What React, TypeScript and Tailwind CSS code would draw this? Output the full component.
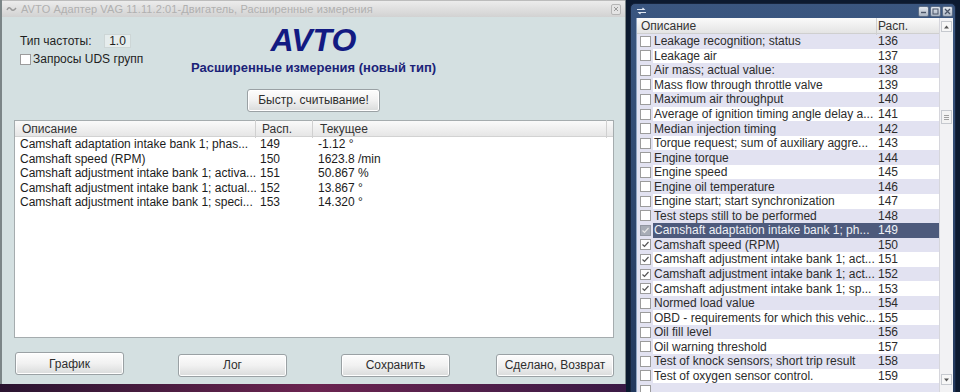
import React from "react";

const leftRows = [
  ["Camshaft adaptation intake bank 1; phas...", "149", "-1.12 °"],
  ["Camshaft speed (RPM)", "150", "1623.8 /min"],
  ["Camshaft adjustment intake bank 1; activa...", "151", "50.867 %"],
  ["Camshaft adjustment intake bank 1; actual...", "152", "13.867 °"],
  ["Camshaft adjustment intake bank 1; speci...", "153", "14.320 °"],
];

const rightRows: [string, string, boolean][] = [
  ["Leakage recognition; status", "136", false],
  ["Leakage air", "137", false],
  ["Air mass; actual value:", "138", false],
  ["Mass flow through throttle valve", "139", false],
  ["Maximum air throughput", "140", false],
  ["Average of ignition timing angle delay a...", "141", false],
  ["Median injection timing", "142", false],
  ["Torque request; sum of auxiliary aggre...", "143", false],
  ["Engine torque", "144", false],
  ["Engine speed", "145", false],
  ["Engine oil temperature", "146", false],
  ["Engine start; start synchronization", "147", false],
  ["Test steps still to be performed", "148", false],
  ["Camshaft adaptation intake bank 1; ph...", "149", true],
  ["Camshaft speed (RPM)", "150", true],
  ["Camshaft adjustment intake bank 1; act...", "151", true],
  ["Camshaft adjustment intake bank 1; act...", "152", true],
  ["Camshaft adjustment intake bank 1; sp...", "153", true],
  ["Normed load value", "154", false],
  ["OBD - requirements for which this vehic...", "155", false],
  ["Oil fill level", "156", false],
  ["Oil warning threshold", "157", false],
  ["Test of knock sensors; short trip result", "158", false],
  ["Test of oxygen sensor control.", "159", false],
  ["", "", false],
];

function Check({ on = false, dim = false }: { on?: boolean; dim?: boolean }) {
  return (
    <span
      className={`w-[11px] h-[11px] border flex items-center justify-center shrink-0 ${
        dim ? "bg-[#a7acb6] border-[#9297a2]" : "bg-white border-[#9c9c9c]"
      }`}
    >
      {on && (
        <svg width="9" height="9" viewBox="0 0 9 9">
          <path d="M1.5 4.5 L3.5 6.5 L7.5 2" fill="none" stroke={dim ? "#e6e6e6" : "#555"} strokeWidth="1.2" />
        </svg>
      )}
    </span>
  );
}

function Btn({ label, w }: { label: string; w: string }) {
  return (
    <button
      className={`${w} h-[23px] rounded-[3px] border border-[#9aa1a4] bg-linear-to-b from-[#fdfdfd] via-[#f1f1f1] to-[#d9dbdb] text-[12px] text-[#2e2e2e] shadow-[inset_0_0_0_1px_#ffffff]`}
    >
      {label}
    </button>
  );
}

export default function App() {
  return (
    <div className="w-[960px] h-[392px] overflow-hidden flex bg-[#0c1a30] font-['Liberation_Sans',Arial,sans-serif]">
      {/* LEFT WINDOW */}
      <div className="w-[626px] flex flex-col shrink-0">
        <div className="h-[384px] flex flex-col border-l-2 border-r border-[#7b8587] bg-[#d4e0e1]">
          {/* title bar */}
          <div className="h-[17px] flex items-center bg-linear-to-b from-[#ececec] to-[#d2d2d2] border-t border-[#bcbcbc] px-[4px]">
            <svg width="11" height="8" viewBox="0 0 11 8" className="mr-[4px]">
              <path d="M1 5 Q3 1 5 4 T10 3" fill="none" stroke="#9a9a9a" strokeWidth="1.4" />
            </svg>
            <span className="text-[11px] text-[#b0b0b0] tracking-[0.1px]">
              AVTO Адаптер VAG 11.11.2:01-Двигатель, Расширенные измерения
            </span>
            <span className="ml-auto w-[10px] h-[11px] rounded-[2px] border border-[#b5b5b5] bg-[#e4e4e4] flex items-center justify-center">
              <svg width="6" height="6" viewBox="0 0 6 6">
                <path d="M1 1 L5 5 M5 1 L1 5" stroke="#9a9a9a" strokeWidth="1" />
              </svg>
            </span>
          </div>

          {/* top section */}
          <div className="h-[103px] grid grid-cols-[1fr_auto_1fr]">
            <div className="pl-[18px] pt-[17px] text-[12px] text-[#1e1e1e]">
              <div className="flex items-center h-[14px]">
                <span className="w-[84px]">Тип частоты:</span>
                <span className="w-[27px] h-[14px] bg-[#e6eded] border border-[#cdd6d6] text-center leading-[12px]">1.0</span>
              </div>
              <div className="flex items-center mt-[5px] h-[12px]">
                <Check />
                <span className="ml-[2px]">Запросы UDS групп</span>
              </div>
            </div>
            <div className="flex flex-col items-center pt-[7px]">
              <div className="text-[32px] leading-[32px] font-bold italic text-[#121a82]">AVTO</div>
              <div className="mt-[4px] text-[13px] leading-[16px] font-bold text-[#1b2378]">
                Расширенные измерения (новый тип)
              </div>
              <div className="mt-[11px]">
                <Btn label="Быстр. считывание!" w="w-[133px]" />
              </div>
            </div>
            <div />
          </div>

          {/* measurements list */}
          <div className="ml-[12px] w-[600px] h-[218px] border border-[#a5acae] bg-white text-[12px]">
            <div className="h-[16px] flex items-center bg-linear-to-b from-[#fafafa] to-[#e6e6e6] border-b border-[#d2d2d2] text-[#333]">
              <span className="w-[241px] pl-[7px] border-r border-[#d0d0d0]">Описание</span>
              <span className="w-[57px] pl-[6px] border-r border-[#d0d0d0]">Расп.</span>
              <span className="w-[294px] pl-[7px] border-r border-[#d0d0d0]">Текущее</span>
            </div>
            {leftRows.map(([d, n, v]) => (
              <div key={n} className="h-[14.5px] leading-[14.5px] flex text-[#1c1c1c] whitespace-nowrap">
                <span className="w-[241px] shrink-0 pl-[5px] overflow-hidden">{d}</span>
                <span className="w-[57px] shrink-0 pl-[4px]">{n}</span>
                <span className="pl-[5px]">{v}</span>
              </div>
            ))}
          </div>

          {/* bottom buttons */}
          <div className="mt-[14px] ml-[13px] flex">
            <Btn label="График" w="w-[109px]" />
            <div className="ml-[54px]"><Btn label="Лог" w="w-[109px]" /></div>
            <div className="ml-[54px]"><Btn label="Сохранить" w="w-[109px]" /></div>
            <div className="ml-[46px]"><Btn label="Сделано, Возврат" w="w-[118px]" /></div>
          </div>
        </div>
        <div className="flex-1 bg-linear-to-r from-[#2a1430] via-[#6b2450] to-[#3a1a45]" />
      </div>

      {/* RIGHT WINDOW */}
      <div className="ml-[4px] mt-[3px] w-[326px] h-[395px] shrink-0 flex flex-col rounded-t-[5px] bg-linear-to-b from-[#3a5680] to-[#22385d] border border-[#16243c]">
        <div className="h-[14px] flex items-center pl-[5px] pr-[2px]">
          <svg width="11" height="8" viewBox="0 0 11 8">
            <path d="M1 2.5 H8 L6.5 1 M10 5.5 H3 L4.5 7" fill="none" stroke="#dfe7f2" strokeWidth="1.2" />
          </svg>
          <div className="ml-auto flex gap-[1px]">
            {["min", "max", "close"].map((k) => (
              <span key={k} className="w-[11px] h-[11px] rounded-[2px] bg-linear-to-b from-[#e2e7ee] to-[#aab4c2] border border-[#5a6b85] flex items-center justify-center">
                <svg width="7" height="7" viewBox="0 0 7 7">
                  {k === "min" && <path d="M1 4.5 H6" stroke="#4a5568" strokeWidth="1.4" />}
                  {k === "max" && <rect x="1" y="1" width="5" height="5" fill="none" stroke="#4a5568" strokeWidth="1" />}
                  {k === "close" && <path d="M1 1 L6 6 M6 1 L1 6" stroke="#4a5568" strokeWidth="1.3" />}
                </svg>
              </span>
            ))}
          </div>
        </div>
        <div className="flex-1 flex ml-[5px] mr-[2px] bg-[#e2e2f1] border-l border-[#8ea3c0] overflow-hidden">
          <div className="w-[303px] flex flex-col text-[12px]">
            <div className="h-[16px] shrink-0 flex items-center bg-linear-to-b from-[#fafafa] to-[#e4e4e4] border-b border-[#cfcfcf] text-[#333]">
              <span className="w-[240px] pl-[4px] border-r border-[#d0d0d0]">Описание</span>
              <span className="w-[62px] pl-[1px]">Расп.</span>
            </div>
            {rightRows.map(([d, n, on], i) => {
              const sel = n === "149";
              const white = i % 2 === 1;
              return (
                <div key={i} className="h-[14.55px] shrink-0 flex items-center">
                  <span className="w-[16px] flex justify-center">
                    <Check on={on} dim={sel} />
                  </span>
                  <div
                    className={`flex-1 h-full flex items-center leading-[14px] ${
                      sel ? "bg-[#4d5a7c] text-[#eef1f7]" : white ? "bg-white text-[#2c2c2c]" : "text-[#2c2c2c]"
                    }`}
                  >
                    <span className="w-[225px] pl-[1px] whitespace-nowrap overflow-hidden">{d}</span>
                    <span>{n}</span>
                  </div>
                </div>
              );
            })}
          </div>
          {/* scrollbar */}
          <div className="w-[14px] bg-[#f2f2f4] border-l border-[#d6d6dc] flex flex-col items-center pt-[3px]">
            <span className="w-[11px] h-[11px] border border-[#c6c9cf] bg-[#f7f7f7] flex items-center justify-center">
              <svg width="5" height="4" viewBox="0 0 5 4"><path d="M0 3.5 L2.5 0.5 L5 3.5Z" fill="#555" /></svg>
            </span>
            <span className="mt-[78px] w-[11px] h-[14px] border border-[#c6c9cf] bg-[#f3f3f3] flex flex-col items-center justify-center gap-[1px]">
              <span className="w-[5px] h-px bg-[#a0a0a0]" />
              <span className="w-[5px] h-px bg-[#a0a0a0]" />
              <span className="w-[5px] h-px bg-[#a0a0a0]" />
            </span>
            <span className="mt-[250px] w-[11px] h-[11px] border border-[#c6c9cf] bg-[#f7f7f7] flex items-center justify-center">
              <svg width="5" height="4" viewBox="0 0 5 4"><path d="M0 0.5 L2.5 3.5 L5 0.5Z" fill="#555" /></svg>
            </span>
          </div>
        </div>
      </div>
    </div>
  );
}
